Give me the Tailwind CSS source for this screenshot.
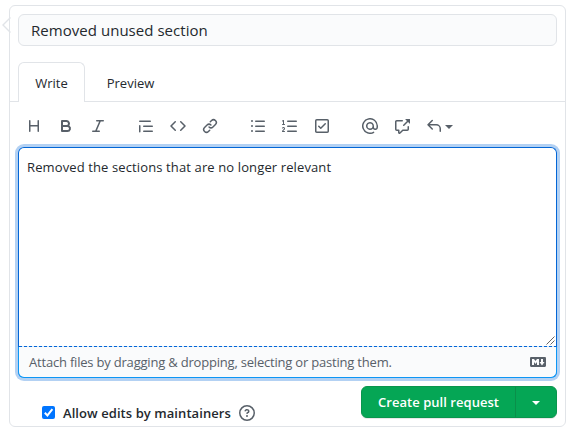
<!DOCTYPE html>
<html lang="en">
<head>
<meta charset="utf-8">
<title>Open a pull request</title>
<script src="https://cdn.jsdelivr.net/npm/@tailwindcss/browser@4"></script>
</head>
<body class="bg-white pt-[5px] pl-[9px] text-[#24292e] font-['Open_Sans','Noto_Sans',sans-serif]">
<main class="relative flex h-[422px] w-[557px] flex-col rounded-md border border-[#e1e4e8]">
  <svg class="absolute -left-[8px] top-[11px]" width="9" height="16" viewBox="0 0 9 16" fill="none"><path d="M8 0h1v16H8z" fill="#fff"/><path d="M8.500 .5L1 8l7.500 7.500" stroke="#e1e4e8" stroke-width="1.400"/></svg>
  <div class="mx-2 mt-2 flex h-8 shrink-0 items-center rounded-md border border-[#e1e4e8] bg-[#fafbfc] px-3 whitespace-nowrap"><span class="text-[15px] tracking-[0.04px]">Removed unused section</span></div>
  <nav class="mt-4 flex h-10 shrink-0 border-b border-[#e1e4e8] px-2 text-[13px]">
    <div class="-mb-px flex h-10 w-[67px] items-center justify-center rounded-t-md border border-b-0 border-[#e1e4e8] bg-white pt-[2px]">Write</div>
    <div class="flex w-[91px] items-center justify-center pt-[4px]">Preview</div>
  </nav>
  <div class="flex h-[45px] shrink-0 items-center gap-8 pt-[3px] pl-4 text-[#586069]">
    <div class="flex gap-4">
      <svg width="16" height="16" fill="currentColor"><path d="M3.750 2a.75.75 0 01.75.75V7h7V2.750a.75.75 0 011.500 0v10.500a.75.75 0 01-1.500 0V8.500h-7v4.750a.75.75 0 01-1.500 0V2.750A.75.75 0 013.750 2z"/></svg>
      <svg width="16" height="16" fill="currentColor" fill-rule="evenodd"><path d="M4 2a1 1 0 00-1 1v10a1 1 0 001 1h5.500a3.500 3.500 0 001.852-6.470A3.500 3.500 0 008.500 2H4zm4.500 5a1.500 1.500 0 100-3H5v3h3.500zM5 9v3h4.500a1.500 1.500 0 000-3H5z"/></svg>
      <svg width="16" height="16" fill="currentColor"><path d="M6 2.750A.75.75 0 016.750 2h6.500a.75.75 0 010 1.500h-2.505l-3.858 9H9.250a.75.75 0 010 1.500h-6.500a.75.75 0 010-1.500h2.505l3.858-9H6.750A.75.75 0 016 2.750z"/></svg>
    </div>
    <div class="flex gap-4">
      <svg width="16" height="16" fill="currentColor"><path d="M1.750 2.500a.75.75 0 000 1.500h10.500a.75.75 0 000-1.500H1.750zm4 5a.75.75 0 000 1.500h8.500a.75.75 0 000-1.500h-8.500zm0 5a.75.75 0 000 1.500h8.500a.75.75 0 000-1.500h-8.500zM2.500 7.750a.75.75 0 00-1.500 0v6a.75.75 0 001.500 0v-6z"/></svg>
      <svg width="16" height="16" fill="currentColor"><path d="M4.720 3.220a.75.75 0 011.060 1.060L2.060 8l3.720 3.720a.75.75 0 11-1.060 1.060L.47 8.530a.75.75 0 010-1.060l4.250-4.250zm6.560 0a.75.75 0 10-1.060 1.060L13.940 8l-3.720 3.720a.75.75 0 101.060 1.060l4.250-4.250a.75.75 0 000-1.060l-4.250-4.250z"/></svg>
      <svg width="16" height="16" fill="currentColor"><path d="M7.775 3.275a.75.75 0 001.060 1.060l1.250-1.250a2 2 0 112.830 2.830l-2.500 2.500a2 2 0 01-2.830 0 .75.75 0 00-1.060 1.060 3.500 3.500 0 004.950 0l2.500-2.500a3.500 3.500 0 00-4.950-4.950l-1.250 1.250zm-4.690 9.640a2 2 0 010-2.830l2.500-2.500a2 2 0 012.830 0 .75.75 0 001.060-1.060 3.500 3.500 0 00-4.950 0l-2.500 2.500a3.500 3.500 0 004.950 4.950l1.250-1.250a.75.75 0 00-1.060-1.060l-1.250 1.250a2 2 0 01-2.830 0z"/></svg>
    </div>
    <div class="flex gap-4">
      <svg width="16" height="16" fill="currentColor"><path d="M2 4a1 1 0 100-2 1 1 0 000 2zm3.750-1.500a.75.75 0 000 1.500h8.500a.75.75 0 000-1.500h-8.500zm0 5a.75.75 0 000 1.500h8.500a.75.75 0 000-1.500h-8.500zm0 5a.75.75 0 000 1.500h8.500a.75.75 0 000-1.500h-8.500zM3 8a1 1 0 11-2 0 1 1 0 012 0zm-1 6a1 1 0 100-2 1 1 0 000 2z"/></svg>
      <svg width="16" height="16" fill="currentColor"><path d="M2.003 2.500a.5.5 0 00-.723-.447l-1.003.5a.5.5 0 00.446.895l.28-.14V6H.5a.5.5 0 000 1h2.006a.5.5 0 100-1h-.503V2.500zM5 3.250a.75.75 0 01.75-.75h8.500a.75.75 0 010 1.500h-8.500A.75.75 0 015 3.250zm0 5a.75.75 0 01.75-.75h8.500a.75.75 0 010 1.500h-8.500A.75.75 0 015 8.250zm0 5a.75.75 0 01.75-.75h8.500a.75.75 0 010 1.500h-8.500a.75.75 0 01-.75-.75zM.924 10.320l.003-.004a.851.851 0 01.144-.153A.66.66 0 011.500 10c.195 0 .306.068.374.146a.57.57 0 01.128.376c0 .453-.269.682-.8 1.078l-.035.025C.692 11.980 0 12.495 0 13.500a.5.5 0 00.5.5h2.003a.5.5 0 000-1H1.146c.132-.197.351-.372.654-.597l.047-.035c.47-.35 1.156-.858 1.156-1.845 0-.365-.118-.744-.377-1.038-.268-.303-.658-.484-1.126-.484-.48 0-.84.202-1.068.392a1.858 1.858 0 00-.348.384l-.01.018a.5.5 0 00.851.525z"/></svg>
      <svg width="16" height="16" fill="currentColor" fill-rule="evenodd"><path d="M2.500 2.750a.25.25 0 01.25-.25h10.500a.25.25 0 01.25.25v10.500a.25.25 0 01-.25.25H2.750a.25.25 0 01-.25-.25V2.750zM2.750 1A1.750 1.750 0 001 2.750v10.500c0 .966.784 1.750 1.750 1.750h10.500A1.750 1.750 0 0015 13.250V2.750A1.750 1.750 0 0013.250 1H2.750zm9.030 5.280a.75.75 0 00-1.060-1.060L6.750 9.190 5.280 7.720a.75.75 0 00-1.060 1.060l2 2a.75.75 0 001.060 0l4.500-4.500z"/></svg>
    </div>
    <div class="flex gap-4">
      <svg width="16" height="16" fill="currentColor" fill-rule="evenodd"><path d="M4.750 2.370a6.500 6.500 0 006.500 11.260.75.75 0 01.75 1.298 8 8 0 113.994-7.273.754.754 0 01.006.095v1.500a2.750 2.750 0 01-5.072 1.475A4 4 0 1112 8v1.250a1.250 1.250 0 002.500 0V7.867a6.500 6.500 0 00-9.750-5.496V2.370zM10.500 8a2.500 2.500 0 10-5 0 2.500 2.500 0 005 0z"/></svg>
      <svg width="16" height="16" fill="currentColor"><path d="M16 1.250v4.146a.25.25 0 01-.427.177L14.030 4.030l-3.750 3.750a.75.75 0 11-1.060-1.060l3.750-3.750-1.543-1.543A.25.25 0 0111.604 1h4.146a.25.25 0 01.25.25zM2.750 3.500a.25.25 0 00-.25.25v7.500c0 .138.112.25.25.25h2a.75.75 0 01.75.75v2.190l2.720-2.720a.75.75 0 01.53-.22h4.500a.25.25 0 00.25-.25v-2.500a.75.75 0 111.500 0v2.500A1.750 1.750 0 0113.250 13H9.060l-2.573 2.573A1.457 1.457 0 014 14.543V13H2.750A1.750 1.750 0 011 11.250v-7.500C1 2.784 1.784 2 2.750 2h5.500a.75.75 0 010 1.500h-5.500z"/></svg>
      <div class="flex items-center gap-[3px]">
        <svg width="16" height="16" fill="currentColor"><path d="M6.780 1.970a.75.75 0 010 1.060L3.810 6h6.440A4.750 4.750 0 0115 10.750v2.500a.75.75 0 01-1.500 0v-2.500a3.250 3.250 0 00-3.250-3.250H3.810l2.970 2.970a.75.75 0 11-1.060 1.060L1.470 7.280a.75.75 0 010-1.060l4.250-4.250a.75.75 0 011.060 0z"/></svg>
        <svg width="8" height="4" class="mt-[2px]" fill="currentColor"><path d="M0 0h8L4 4z"/></svg>
      </div>
    </div>
  </div>
  <section class="mx-2 flex h-[231px] shrink-0 flex-col rounded-md border border-[#0366d6] border-b-[#0d96f5] shadow-[0_0_0_3px_#b3d1f3]">
    <div class="relative flex-1 px-2 pt-[9px] text-[13px] leading-[20px] whitespace-nowrap"><span class="tracking-[0.12px]">Removed the sections that are no longer relevant</span>
      <svg class="absolute right-[1px] bottom-[1px]" width="9" height="9" fill="none" stroke="#666" stroke-width="1"><path d="M.5 8.500l8-8M4.500 8.500l4-4"/></svg>
    </div>
    <div class="h-px shrink-0 bg-[repeating-linear-gradient(90deg,#0366d6_0_3px,#d5e5f7_3px_5px)]"></div>
    <div class="-mx-px -mb-px flex h-[31px] shrink-0 items-center justify-between rounded-b-md border border-t-0 border-[#0d96f5] bg-[#fafbfc] px-[10px] text-[13px] whitespace-nowrap text-[#586069]"><span class="pt-px tracking-[-0.2px]">Attach files by dragging &amp; dropping, selecting or pasting them.</span>
      <svg width="16" height="16" fill="currentColor" fill-rule="evenodd"><path d="M14.850 3H1.150C.52 3 0 3.520 0 4.150v7.690C0 12.480.52 13 1.150 13h13.690c.64 0 1.150-.52 1.150-1.150v-7.700C16 3.520 15.480 3 14.850 3zM9 11H7V8L5.500 9.920 4 8v3H2V5h2l1.500 2L7 5h2v6zm2.990.5L9.500 8H11V5h2v3h1.500l-2.510 3.500z"/></svg>
    </div>
  </section>
  <footer class="mt-2 mr-2 ml-8 flex h-8 items-center justify-between">
    <div class="flex items-center pt-[21px] pb-0">
      <svg class="mb-[1px]" width="13" height="13"><rect width="13" height="13" rx="2" fill="#0075ff"/><path d="M2.800 6.800l2.600 2.600 5-6.200" fill="none" stroke="#fff" stroke-width="2"/></svg>
      <span class="ml-2 text-[13px] leading-5 font-semibold tracking-[0.07px] whitespace-nowrap">Allow edits by maintainers</span>
      <svg class="mt-px ml-2 text-[#586069]" width="16" height="16" fill="currentColor" fill-rule="evenodd"><path d="M8 1.500a6.500 6.500 0 100 13 6.500 6.500 0 000-13zM0 8a8 8 0 1116 0A8 8 0 010 8zm9 3a1 1 0 11-2 0 1 1 0 012 0zM6.920 6.085c.081-.16.19-.299.34-.398.145-.097.371-.187.74-.187.28 0 .553.087.738.225A.613.613 0 019 6.250c0 .177-.04.264-.077.318a.956.956 0 01-.277.245c-.076.051-.158.1-.258.161l-.007.004a7.728 7.728 0 00-.313.195 2.416 2.416 0 00-.692.661.75.75 0 001.248.832.956.956 0 01.276-.245 5.490 5.490 0 01.26-.161l.006-.004c.093-.057.204-.123.313-.195.222-.149.487-.355.692-.662.214-.32.329-.702.329-1.150 0-.76-.36-1.348-.863-1.725A2.760 2.760 0 008 4c-.631 0-1.155.16-1.572.438-.413.276-.68.638-.849.977a.75.75 0 101.342.67z"/></svg>
    </div>
    <div class="flex h-8 w-[196px] rounded-md border border-[#0a954d] bg-[#05a655] text-white shadow-[0_1px_0_#1b1f231a]">
      <div class="flex w-[154px] items-center justify-center border-r border-[#0a8f4a] pt-[2px] text-[13px] font-semibold tracking-[0.04px] whitespace-nowrap">Create pull request</div>
      <div class="flex flex-1 items-center justify-center pt-px"><svg width="8" height="4" fill="currentColor"><path d="M0 0h8L4 4z"/></svg></div>
    </div>
  </footer>
</main>
</body>
</html>
